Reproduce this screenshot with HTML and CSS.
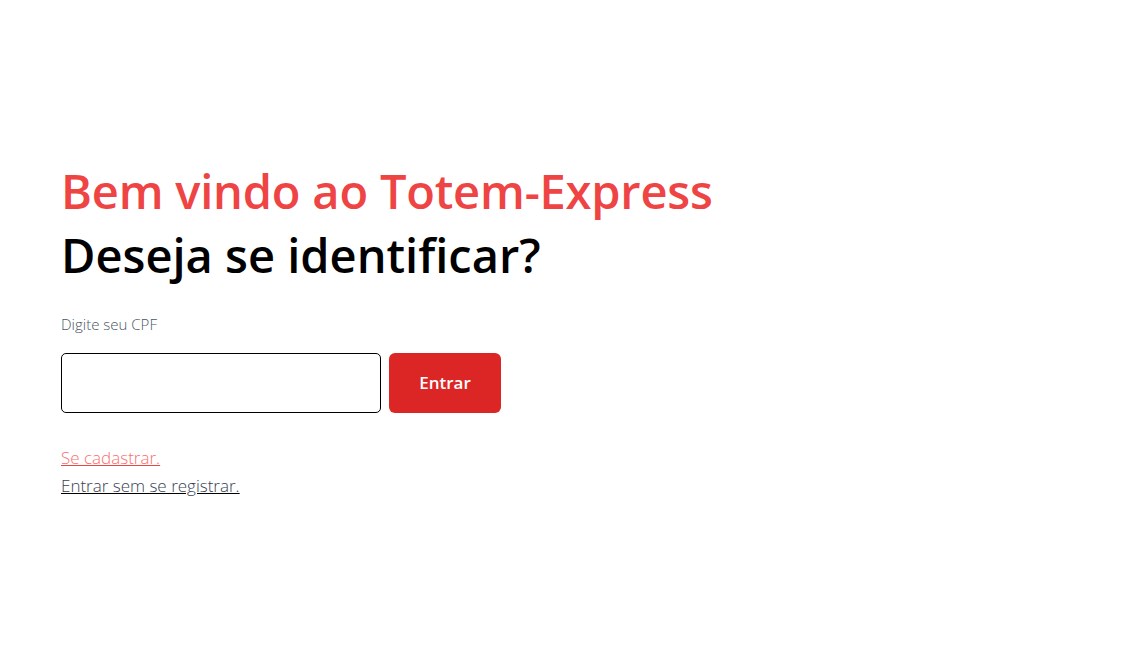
FILE: index.html
```html
<!DOCTYPE html>
<html lang="pt-BR">
<head>
<meta charset="utf-8">
<title>Totem-Express</title>
<link rel="stylesheet" href="styles.css">
</head>
<body>
<main class="page">
  <section class="intro">
    <h1 class="title-red">Bem vindo ao Totem-Express</h1>
    <h2 class="title-black">Deseja se identificar?</h2>
  </section>
  <form class="cpf-form">
    <label class="label" for="cpf">Digite seu CPF</label>
    <div class="row">
      <input id="cpf" class="input" type="text">
      <button type="button" class="btn">Entrar</button>
    </div>
  </form>
  <nav class="links">
    <a href="#" class="link link-red">Se cadastrar.</a>
    <a href="#" class="link link-dark">Entrar sem se registrar.</a>
  </nav>
</main>
</body>
</html>
```
FILE: styles.css
```css
* { box-sizing: border-box; }
html, body { margin: 0; padding: 0; background: #fff; }
body { font-family: "Open Sans", "Noto Sans", sans-serif; }
.page {
  min-height: 665px;
  display: flex;
  flex-direction: column;
  justify-content: center;
  padding: 0 61px 7px;
}
.intro h1, .intro h2 { margin: 0; font-weight: 600; font-size: 47px; line-height: 64px; }
.title-red { color: #ef4444; letter-spacing: -0.2px; }
.title-black { color: #000; }
.cpf-form { margin-top: 27px; display: flex; flex-direction: column; }
.label { font-size: 15px; font-weight: 300; color: #4b5563; line-height: 20px; }
.row { display: flex; gap: 8px; margin-top: 19px; }
.input { width: 320px; height: 60px; border: 1px solid #000; border-radius: 5px; font: inherit; }
.btn { width: 112px; height: 60px; border: 0; border-radius: 6px; background: #dc2626; color: #fff; font-family: inherit; font-size: 17px; font-weight: 600; }
.links { margin-top: 31px; display: flex; flex-direction: column; align-items: flex-start; }
.link { font-size: 17px; font-weight: 300; line-height: 28px; }
.link-red { color: #f87171; text-decoration-color: #ef4444; }
.link-dark { color: #374151; text-decoration-color: #000; }
```
